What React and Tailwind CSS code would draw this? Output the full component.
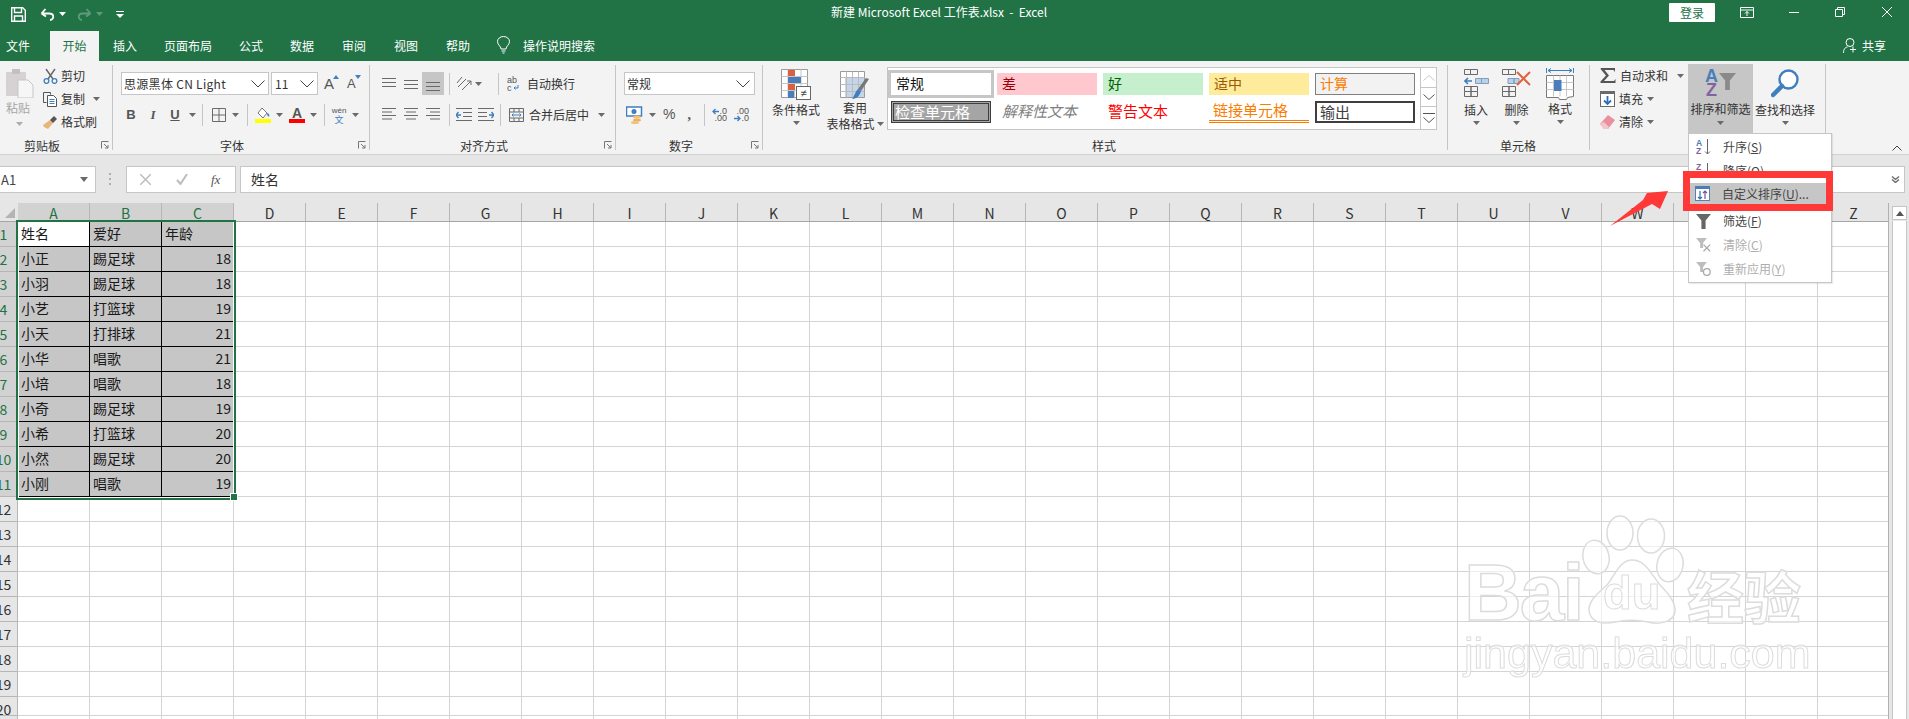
import React from 'react';

const Caret = ({ c = '' }) => (
  <svg className={`shrink-0 ${c}`} width="7" height="4" viewBox="0 0 7 4"><path d="M0 0h7L3.5 4z" fill="#6a6a6a" /></svg>
);
const Chevron = ({ c = '' }) => (
  <svg className={`shrink-0 ${c}`} width="14" height="8" viewBox="0 0 14 8"><path d="M.5.5 7 7l6.5-6.5" fill="none" stroke="#444" /></svg>
);
const Launcher = ({ c = '' }) => (
  <svg className={`shrink-0 ${c}`} width="8" height="8" viewBox="0 0 8 8"><path d="M.5 7.5v-7h7M3 3l4 4M7 4v3H4" fill="none" stroke="#777" /></svg>
);
const VSep = ({ c = '' }) => <div className={`w-px h-[22px] bg-[#c6c6c6] shrink-0 ${c}`} />;
const Lines = ({ ws, gap = 4, c = '', dy = 0, align = 'left' }) => (
  <svg className={`shrink-0 ${c}`} width="14" height="14" viewBox="0 0 14 14">
    {ws.map((w, i) => {
      const x = align === 'left' ? 0 : align === 'right' ? 14 - w : (14 - w) / 2;
      return <rect key={i} x={x} y={dy + i * gap} width={w} height="1" fill="#6a6a6a" />;
    })}
  </svg>
);

const Group = ({ w, label, labelMl, launcher, children }) => (
  <div className={`${w} h-[85px] mt-[4px] border-r border-[#c6c6c6] shrink-0 flex flex-col`}>
    <div className="h-[73px] shrink-0 relative">{children}</div>
    <div className="h-[16px] shrink-0 flex items-center leading-[16px] text-[#333]">
      <span className={labelMl}>{label}</span>
      {launcher && <Launcher c="ml-auto mr-[3px] -mt-[2px]" />}
    </div>
  </div>
);

const Save = () => (
  <svg width="15" height="15" viewBox="0 0 15 15" fill="none" stroke="#fff" strokeWidth="1.4">
    <path d="M.7.7h11l2.6 2.6v11H.7z" /><path d="M3.5 1v4.5h7V1M3.5 14V9h8v5" />
  </svg>
);
const Undo = ({ color = '#fff', flip }) => (
  <svg width="15" height="14" viewBox="0 0 15 14" fill="none" stroke={color} strokeWidth="1.8" className={flip ? '-scale-x-100' : ''}>
    <path d="M1.5 6.5 5.5 2M1.5 6.5 6 9.5M1.5 6.5H9c6 0 5 6.5 1 6.5" />
  </svg>
);

const Paste = () => (
  <svg width="28" height="30" viewBox="0 0 28 30">
    <rect x="0" y="4" width="20" height="24" rx="1" fill="#d6d2d4" />
    <rect x="6" y="1" width="8" height="5" fill="#c4c0c2" />
    <path d="M12 12h10l5 5v13H12z" fill="#f6f6f6" stroke="#c9c6c8" />
  </svg>
);
const Cut = () => (
  <svg width="15" height="16" viewBox="0 0 15 16" fill="none">
    <path d="M3 1l7 10M12 1 5 11" stroke="#666" strokeWidth="1.4" />
    <circle cx="3.5" cy="13" r="2.4" stroke="#3f7fbf" strokeWidth="1.3" />
    <circle cx="11.5" cy="13" r="2.4" stroke="#3f7fbf" strokeWidth="1.3" />
  </svg>
);
const Copy = () => (
  <svg width="15" height="15" viewBox="0 0 15 15" fill="none" stroke="#555">
    <path d="M.5.5h7v2M.5.5v10h3" />
    <path d="M4.5 3.5h6l3 3v8h-9z" fill="#fff" />
    <path d="M6.5 7.5h5M6.5 9.5h5M6.5 11.5h5" stroke="#3f7fbf" />
  </svg>
);
const Painter = () => (
  <svg width="15" height="15" viewBox="0 0 15 15">
    <path d="M7 5 10 8 5 14 1 12 0 10z" fill="#e8b778" />
    <path d="M7 5 11 1l3 3-4 4z" fill="#555" />
  </svg>
);
const Borders = () => (
  <svg width="14" height="14" viewBox="0 0 14 14" fill="none" stroke="#6a6a6a"><path d="M.5.5h13v13H.5zM7 .5v13M.5 7h13" /></svg>
);
const Fill = () => (
  <svg width="16" height="16" viewBox="0 0 16 16">
    <path d="M3 6 7 1l5 5-4 5z" fill="#fff" stroke="#777" />
    <path d="M12 6c2 .5 3 2 2 3.5-1 .5-2-1-2-3.5z" fill="#3f7fbf" />
    <rect x="0" y="12" width="16" height="4" fill="#ffff00" />
  </svg>
);
const FontColor = () => (
  <div className="w-[16px] h-[16px] flex flex-col items-center relative">
    <span className="text-[14px] leading-[12px] text-[#555] font-['Liberation_Sans',sans-serif] font-bold">A</span>
    <div className="absolute bottom-0 w-full h-[4px] bg-[#ff0000]" />
  </div>
);
const Orient = () => (
  <svg width="16" height="16" viewBox="0 0 16 16" fill="none" stroke="#6a6a6a">
    <path d="M1 7 6 1M4 9 9 4M2 11l8-8" />
    <path d="M6 14 15 5M15 5v4M15 5h-4" stroke="#6a6a6a" />
  </svg>
);
const Indent = ({ flip }) => (
  <svg width="16" height="14" viewBox="0 0 16 14" className={flip ? '-scale-x-100' : ''}>
    <path d="M5 7H0M2.5 4 0 7l2.5 3" fill="none" stroke="#3f7fbf" strokeWidth="1.4" />
    <path d="M0 .5h16M7 4.5h9M7 8.5h9M0 12.5h16" stroke="#6a6a6a" />
  </svg>
);
const Wrap = () => (
  <svg width="13" height="16" viewBox="0 0 13 16">
    <text x="0" y="7" fontSize="9" fontFamily="Liberation Sans" fill="#555">ab</text>
    <text x="0" y="15" fontSize="9" fontFamily="Liberation Sans" fill="#555">c</text>
    <path d="M11 9v3H7M8.5 10.5 7 12l1.5 1.5" fill="none" stroke="#3f7fbf" />
  </svg>
);
const Merge = () => (
  <svg width="15" height="14" viewBox="0 0 15 14" fill="none" stroke="#6a6a6a">
    <path d="M.5.5h14v13H.5zM.5 4h14M.5 10h14M5 .5V4M10 .5V4M5 10v3.5M10 10v3.5" />
    <path d="M3 7h9M3 7l1.5-1.5M3 7l1.5 1.5M12 7l-1.5-1.5M12 7l-1.5 1.5" stroke="#3f7fbf" />
  </svg>
);
const Money = () => (
  <svg width="18" height="18" viewBox="0 0 18 18">
    <rect x=".5" y="1" width="15" height="9" fill="#fff" stroke="#3f7fbf" strokeWidth="1.5" />
    <circle cx="8" cy="5.5" r="2.5" fill="#3f7fbf" />
    <ellipse cx="11" cy="11" rx="4" ry="1.6" fill="#f3c078" />
    <ellipse cx="11" cy="14" rx="4" ry="1.6" fill="#eeb060" />
    <ellipse cx="9" cy="16.5" rx="4" ry="1.5" fill="#f3c078" />
  </svg>
);
const Dec = ({ inc }) => (
  <div className="w-[15px] h-[14px] relative font-['Liberation_Sans',sans-serif] text-[9px] leading-[7px] text-[#555]">
    {inc ? (
      <>
        <div className="text-right">.0</div>
        <div className="text-right mt-[0px]">.00</div>
        <svg className="absolute left-0 top-0" width="7" height="7" viewBox="0 0 7 7" fill="none" stroke="#3f7fbf" strokeWidth="1.3"><path d="M7 3.5H1M3.5 1 1 3.5 3.5 6" /></svg>
      </>
    ) : (
      <>
        <div className="text-right">.00</div>
        <div className="text-right">.0</div>
        <svg className="absolute left-0 bottom-0" width="7" height="7" viewBox="0 0 7 7" fill="none" stroke="#3f7fbf" strokeWidth="1.3"><path d="M0 3.5h6M3.5 1 6 3.5 3.5 6" /></svg>
      </>
    )}
  </div>
);
const CondFmt = () => (
  <svg width="30" height="31" viewBox="0 0 30 31">
    <path d="M.5.5h26v28H.5z" fill="#fff" stroke="#9a9a9a" />
    <path d="M7 .5v28M13.5.5v28M20 .5v28M.5 7.5h26M.5 14.5h26M.5 21.5h26" stroke="#c6c6c6" />
    <rect x="7" y="1" width="7" height="6" fill="#d9613f" />
    <rect x="7" y="8" width="13" height="6" fill="#4a7ebb" />
    <rect x="7" y="15" width="7" height="6" fill="#d9613f" />
    <rect x="7" y="22" width="6" height="7" fill="#4a7ebb" />
    <rect x="15.5" y="17.5" width="14" height="13" fill="#fff" stroke="#666" />
    <text x="22.5" y="28" textAnchor="middle" fontSize="11" fill="#444" fontFamily="Liberation Sans">≠</text>
  </svg>
);
const TableFmt = () => (
  <svg width="30" height="29" viewBox="0 0 30 29">
    <path d="M.5.5h24v26H.5z" fill="#fff" stroke="#9a9a9a" />
    <rect x="5" y="7" width="19" height="19" fill="#c5d6ea" />
    <path d="M.5 6.5h24M.5 13.5h24M.5 20.5h24M6.500.5v26M12.500.5v26M18.500.5v26" stroke="#bbb" />
    <path d="M29 8 21 20l-3-2 8-11z" fill="#777" />
    <path d="M18 18l3 2c-1 5-5 8-9 8 2-2 3-7 6-10z" fill="#3f7fbf" />
  </svg>
);
const Ins = () => (
  <svg width="25" height="28" viewBox="0 0 25 28" fill="none" stroke="#6a6a6a">
    <path d="M.5.5h6v5h-6zM6.500.5h7v5h-7zM.5 17.500h6.500v5H.5zM7 17.500h6.500v5H7zM.5 22.500h6.500v5H.5zM7 22.500h6.500v5H7z" />
    <path d="M11.500 9.500h6v5h-6zM17.500 9.500h7v5h-7z" fill="#bcd0e6" stroke="#7f9ec0" />
    <path d="M8 12H1M4 9l-3 3 3 3" stroke="#3f7fbf" strokeWidth="1.6" />
  </svg>
);
const Del = () => (
  <svg width="29" height="28" viewBox="0 0 29 28" fill="none" stroke="#6a6a6a">
    <path d="M.5.5h6v5h-6zM6.500.5h7v5h-7zM.5 17.500h6.500v5H.5zM7 17.500h6.500v5H7zM.5 22.500h6.500v5H.5zM7 22.500h6.500v5H7z" />
    <path d="M6 9.500h6v5H6zM12 9.500h5v5h-5z" fill="#bcd0e6" stroke="#7f9ec0" />
    <path d="M15 3 28 16M28 3 15 16" stroke="#e0623f" strokeWidth="2" />
  </svg>
);
const Fmt = () => (
  <svg width="28" height="32" viewBox="0 0 28 32" fill="none">
    <path d="M.5 0v5M27.500 0v5M2 2.500h24M2 2.500 5 .5M2 2.500l3 2M26 2.500l-3-2M26 2.500l-3 2" stroke="#3f7fbf" />
    <path d="M.5 7.500h27v21l-6 1-1 2h-7l-1-2h-12z" fill="#fff" stroke="#7a7a7a" />
    <path d="M7.500 7.500v21M14 7.500v21M20.500 7.500v21M.5 14.500h27M.5 21.500h27" stroke="#c6c6c6" />
    <rect x="8" y="12" width="7.500" height="11" fill="#4a7ebb" />
  </svg>
);
const Sigma = () => (
  <svg width="16" height="15" viewBox="0 0 16 15"><path d="M1 0h14v4l-1.500-2H4.500L9 7.500 4 13h10l1.500-2v4H.5v-1.500L6 7.500.5 1z" fill="#555" /></svg>
);
const FillIc = () => (
  <svg width="15" height="16" viewBox="0 0 15 16">
    <rect x=".5" y=".5" width="14" height="15" fill="#fff" stroke="#6a6a6a" />
    <rect x="0" y="0" width="15" height="3" fill="#6a6a6a" />
    <path d="M7.500 5v8M4 9.500l3.500 3.500L11 9.500" fill="none" stroke="#2f6eb5" strokeWidth="1.8" />
  </svg>
);
const Eraser = () => (
  <svg width="15" height="14" viewBox="0 0 15 14">
    <path d="M0 9 8 0l7 5-7 9-4 0z" fill="#e9909c" />
    <path d="M0 9 4 14h4l1-2-5-5z" fill="#f4c5cc" />
  </svg>
);
const Funnel = ({ c = '#8a8a8a', w = 18, h = 19 }) => (
  <svg width={w} height={h} viewBox="0 0 18 19"><path d="M0 1h18l-6.500 8v10h-5V9z" fill={c} /></svg>
);
const Search = () => (
  <svg width="28" height="29" viewBox="0 0 28 29" fill="none">
    <circle cx="17.500" cy="10.500" r="9" stroke="#3f7fbf" strokeWidth="2.400" fill="#fff" />
    <path d="M11 17 2 26" stroke="#3f7fbf" strokeWidth="4.500" strokeLinecap="round" />
  </svg>
);
const AZ = ({ flip }) => (
  <svg width="15" height="16" viewBox="0 0 15 16" className="font-['Liberation_Sans',sans-serif]">
    <text x="0" y="7" fontSize="8.500" fontWeight="bold" fill={flip ? '#8064a2' : '#4a7ebb'}>{flip ? 'Z' : 'A'}</text>
    <text x="0" y="15" fontSize="8.500" fontWeight="bold" fill={flip ? '#4a7ebb' : '#8064a2'}>{flip ? 'A' : 'Z'}</text>
    <path d="M11.500 0v15M9 12.500l2.500 2.500 2.500-2.500" fill="none" stroke="#666" />
  </svg>
);
const CustomSort = () => (
  <svg width="15" height="15" viewBox="0 0 15 15">
    <rect x=".5" y=".5" width="14" height="14" fill="#fff" stroke="#5a7fb0" />
    <rect x="0" y="0" width="15" height="3" fill="#4a7ebb" />
    <path d="M5 5v8M3 11l2 2 2-2" fill="none" stroke="#2f6eb5" strokeWidth="1.200" />
    <path d="M10 13V5M8 7l2-2 2 2" fill="none" stroke="#7a4ea2" strokeWidth="1.200" />
  </svg>
);
const FClear = () => (
  <svg width="15" height="16" viewBox="0 0 18 19">
    <path d="M0 1h13L8.500 7v6H5V7z" fill="#bdbdbd" />
    <path d="M9 9l8 8M17 9l-8 8" stroke="#a8a8a8" strokeWidth="1.500" />
  </svg>
);
const FReapply = () => (
  <svg width="15" height="16" viewBox="0 0 18 19">
    <path d="M0 1h13L8.500 7v6H5V7z" fill="#bdbdbd" />
    <circle cx="13" cy="13" r="4" fill="none" stroke="#a8a8a8" strokeWidth="1.500" />
  </svg>
);

const Big = ({ w, ml = '', top = 'pt-[4px]', icon, label, caret = true }) => (
  <div className={`${w} ${ml} ${top} h-[65px] shrink-0 flex flex-col items-center`}>
    <div className="h-[32px] flex items-start justify-center">{icon}</div>
    <div className="h-[18px] leading-[18px] whitespace-nowrap">{label}</div>
    {caret && <Caret c="mt-[2px]" />}
  </div>
);

const Style = ({ c, children }) => (
  <div className={`w-[100px] h-[22px] mr-[6px] shrink-0 whitespace-nowrap ${c}`}>{children}</div>
);

const Ribbon = () => (
  <div className="h-[94px] bg-[#f3f3f3] border-b border-[#d2d2d2] flex items-start text-[12px] text-[#333]">
    {/* clipboard */}
    <Group w="w-[113px]" label="剪贴板" labelMl="ml-[24px]" launcher>
      <div className="flex h-full">
        <div className="w-[43px] flex flex-col items-start pl-[6px] pt-[3px] shrink-0">
          <Paste />
          <div className="text-[#a6a6a6] mt-[1px] leading-[18px]">粘贴</div>
          <Caret c="ml-[10px] mt-[5px] opacity-50" />
        </div>
        <div className="flex flex-col -mt-[1px]">
          <div className="h-[23px] flex items-center"><div className="w-[18px] mt-[1px]"><Cut /></div>剪切</div>
          <div className="h-[23px] flex items-center"><div className="w-[18px] mt-[1px]"><Copy /></div>复制<Caret c="ml-[8px] mt-[1px]" /></div>
          <div className="h-[23px] flex items-center"><div className="w-[18px] mt-[1px]"><Painter /></div>格式刷</div>
        </div>
      </div>
    </Group>
    {/* font */}
    <Group w="w-[257px]" label="字体" labelMl="ml-[107px]" launcher>
      <div className="flex items-center pl-[8px] pt-[7px]">
        <div className="w-[148px] h-[23px] bg-white border border-[#c6c6c6] flex items-center pl-[2px] pr-[3px] text-[12px] text-[#333] tracking-[0.3px]">
          思源黑体 CN Light<Chevron c="ml-auto" />
        </div>
        <div className="w-[47px] h-[23px] ml-[2px] bg-white border border-[#c6c6c6] flex items-center pl-[3px] pr-[3px]">11<Chevron c="ml-auto" /></div>
        <div className="ml-[6px] w-[13px] relative text-[15px] text-[#555] leading-[15px] font-['Liberation_Sans',sans-serif]">
          A<span className="absolute left-[9px] -top-[1px] w-0 h-0 border-x-[3px] border-x-transparent border-b-[4px] border-b-[#3f7fbf]" />
        </div>
        <div className="ml-[10px] w-[12px] relative text-[13px] text-[#555] leading-[15px] font-['Liberation_Sans',sans-serif]">
          A<span className="absolute left-[8px] -top-[1px] w-0 h-0 border-x-[3px] border-x-transparent border-t-[4px] border-t-[#3f7fbf]" />
        </div>
      </div>
      <div className="flex items-center pl-[11px] mt-[8px] h-[23px]">
        <span className="w-[14px] text-center font-bold text-[13px] text-[#555] font-['Liberation_Sans',sans-serif]">B</span>
        <span className="w-[14px] ml-[8px] text-center italic font-bold text-[13px] text-[#555] font-['Liberation_Serif',serif]">I</span>
        <span className="w-[14px] ml-[8px] text-center underline font-bold text-[13px] text-[#555] font-['Liberation_Sans',sans-serif]">U</span>
        <Caret c="ml-[7px]" />
        <VSep c="ml-[6px]" />
        <div className="ml-[9px]"><Borders /></div>
        <Caret c="ml-[6px]" />
        <VSep c="ml-[8px]" />
        <div className="ml-[7px]"><Fill /></div>
        <Caret c="ml-[5px]" />
        <div className="ml-[6px]"><FontColor /></div>
        <Caret c="ml-[5px]" />
        <VSep c="ml-[7px]" />
        <div className="ml-[6px] w-[16px] flex flex-col items-center font-['Liberation_Sans',sans-serif] text-[8px] leading-[9px] text-[#555]">
          wén<span className="text-[#3f7fbf] text-[9px] leading-[9px] font-['Noto_Sans_CJK_SC',sans-serif]">文</span>
        </div>
        <Caret c="ml-[5px]" />
      </div>
    </Group>
    {/* align */}
    <Group w="w-[246px]" label="对齐方式" labelMl="ml-[90px]" launcher>
      <div className="flex items-center pl-[12px] pt-[7px] h-[30px]">
        <Lines ws={[14, 14, 14]} gap={4} dy={1} />
        <Lines ws={[14, 14, 14]} gap={4} dy={3} c="ml-[8px]" />
        <div className="w-[22px] h-[23px] ml-[4px] bg-[#c6c6c6] flex items-center justify-center"><Lines ws={[14, 14, 14]} gap={4} dy={5} /></div>
        <VSep c="ml-[5px]" />
        <div className="ml-[6px]"><Orient /></div>
        <Caret c="ml-[3px]" />
        <VSep c="ml-[16px]" />
        <div className="ml-[8px]"><Wrap /></div>
        <span className="ml-[7px]">自动换行</span>
      </div>
      <div className="flex items-center pl-[12px] mt-[8px] h-[23px]">
        <Lines ws={[14, 10, 14, 10]} gap={3.5} />
        <Lines ws={[14, 10, 14, 10]} gap={3.5} align="center" c="ml-[8px]" />
        <Lines ws={[14, 10, 14, 10]} gap={3.5} align="right" c="ml-[8px]" />
        <VSep c="ml-[9px]" />
        <div className="ml-[6px]"><Indent /></div>
        <div className="ml-[6px]"><Indent flip /></div>
        <VSep c="ml-[6px]" />
        <div className="ml-[8px]"><Merge /></div>
        <span className="ml-[5px]">合并后居中</span>
        <Caret c="ml-[9px]" />
      </div>
    </Group>
    {/* number */}
    <Group w="w-[147px]" label="数字" labelMl="ml-[53px]" launcher>
      <div className="pl-[8px] pt-[7px]">
        <div className="w-[131px] h-[23px] bg-white border border-[#c6c6c6] flex items-center pl-[2px] pr-[4px]">常规<Chevron c="ml-auto" /></div>
      </div>
      <div className="flex items-center pl-[10px] mt-[8px] h-[23px]">
        <Money />
        <Caret c="ml-[5px]" />
        <span className="ml-[7px] text-[14px] text-[#555] font-['Liberation_Sans',sans-serif]">%</span>
        <span className="ml-[12px] text-[14px] font-bold text-[#555] font-['Liberation_Serif',serif] leading-[10px]">,</span>
        <VSep c="ml-[13px]" />
        <div className="ml-[7px]"><Dec inc /></div>
        <div className="ml-[7px]"><Dec /></div>
      </div>
    </Group>
    {/* styles */}
    <Group w="w-[685px]" label="样式" labelMl="ml-[329px]">
      <div className="flex items-start h-full">
        <Big w="w-[60px]" ml="ml-[3px]" icon={<CondFmt />} label="条件格式" />
        <div className="w-[58px] h-[65px] pt-[6px] flex flex-col items-center shrink-0">
          <div className="h-[30px]"><TableFmt /></div>
          <div className="h-[16px] leading-[16px]">套用</div>
          <div className="h-[16px] leading-[16px] whitespace-nowrap flex items-center">表格格式<Caret c="ml-[2px]" /></div>
        </div>
        <div className="ml-[3px] mt-[2px] w-[550px] h-[63px] bg-white border border-[#c6c6c6] flex shrink-0">
          <div className="w-[532px] pl-[3px] pt-[5px] shrink-0">
            <div className="flex text-[14px]">
              <Style c="pl-[5px] leading-[20px] bg-white ring-[3px] ring-[#c6c6c6] text-[#111]">常规</Style>
              <Style c="pl-[5px] leading-[20px] bg-[#ffc7ce] text-[#9c0006]">差</Style>
              <Style c="pl-[5px] leading-[20px] bg-[#c6efce] text-[#006100]">好</Style>
              <Style c="pl-[5px] leading-[20px] bg-[#ffeb9c] text-[#9c5700]">适中</Style>
              <Style c="pl-[4px] leading-[18px] bg-[#f2f2f2] border border-[#7f7f7f] text-[#fa7d00]">计算</Style>
            </div>
            <div className="flex mt-[6px] text-[15px]">
              <Style c="pl-[1px] leading-[15px] bg-[#a5a5a5] border-[3px] border-double border-[#3f3f3f] text-white">检查单元格</Style>
              <Style c="pl-[5px] leading-[20px] italic text-[#7f7f7f]">解释性文本</Style>
              <Style c="pl-[5px] leading-[20px] text-[#ff0000]">警告文本</Style>
              <Style c="pl-[4px] leading-[18px] text-[#fa7d00] border-b-[3px] border-double border-[#fa7d00]">链接单元格</Style>
              <Style c="pl-[3px] leading-[17px] bg-white border-2 border-[#3f3f3f] text-[#3f3f3f]">输出</Style>
            </div>
          </div>
          <div className="w-[16px] border-l border-[#c6c6c6] flex flex-col shrink-0">
            <div className="h-[20px] border-b border-[#c6c6c6] flex items-center justify-center">
              <svg width="12" height="6" viewBox="0 0 12 6"><path d="M.5 5.500 6 .5l5.500 5" fill="none" stroke="#c6c6c6" /></svg>
            </div>
            <div className="h-[19px] border-b border-[#c6c6c6] flex items-center justify-center">
              <svg width="12" height="6" viewBox="0 0 12 6"><path d="M.5.5 6 5.500 11.500.5" fill="none" stroke="#555" /></svg>
            </div>
            <div className="flex-1 flex flex-col items-center justify-center gap-[3px]">
              <div className="w-[12px] h-px bg-[#555]" />
              <svg width="12" height="6" viewBox="0 0 12 6"><path d="M.5.5 6 5.500 11.500.5" fill="none" stroke="#555" /></svg>
            </div>
          </div>
        </div>
      </div>
    </Group>
    {/* cells */}
    <Group w="w-[142px]" label="单元格" labelMl="ml-[52px]">
      <div className="flex items-start">
        <Big w="w-[28px]" ml="ml-[14px]" icon={<Ins />} label="插入" />
        <Big w="w-[29px]" ml="ml-[12px]" icon={<Del />} label="删除" />
        <Big w="w-[28px]" ml="ml-[15px]" top="pt-[3px]" icon={<Fmt />} label="格式" />
      </div>
    </Group>
    {/* editing */}
    <div className="w-[236px] h-[86px] mt-[3px] border-r border-[#c6c6c6] shrink-0 flex items-start">
      <div className="flex flex-col ml-[10px] w-[88px] shrink-0">
        <div className="h-[23px] flex items-center"><Sigma /><span className="ml-[4px]">自动求和</span><Caret c="ml-[9px]" /></div>
        <div className="h-[23px] flex items-center"><FillIc /><span className="ml-[4px]">填充</span><Caret c="ml-[4px]" /></div>
        <div className="h-[23px] flex items-center"><Eraser /><span className="ml-[4px]">清除</span><Caret c="ml-[4px]" /></div>
      </div>
      <div className="w-[65px] h-[70px] bg-[#c6c6c6] shrink-0 flex flex-col items-center pt-[5px]">
        <div className="h-[31px] flex items-start">
          <div className="flex flex-col w-[13px] items-center font-['Liberation_Sans',sans-serif] font-bold text-[18px] leading-[14px]">
            <span className="text-[#4a7ebb]">A</span><span className="text-[#8064a2]">Z</span>
          </div>
          <div className="mt-[3px] ml-[1px]"><Funnel w={17} h={18} /></div>
        </div>
        <div className="h-[18px] leading-[18px] whitespace-nowrap">排序和筛选</div>
        <Caret c="mt-[3px]" />
      </div>
      <Big w="w-[62px]" ml="ml-[1px]" top="pt-[5px]" icon={<Search />} label="查找和选择" />
    </div>
    <div className="ml-auto mt-[84px] mr-[7px]">
      <svg width="10" height="6" viewBox="0 0 10 6"><path d="M.5 5.500 5 1l4.500 4.500" fill="none" stroke="#444" /></svg>
    </div>
  </div>
);

const COLS = 'ABCDEFGHIJKLMNOPQRSTUVWXYZ'.split('');
const DATA = [
  ['姓名', '爱好', '年龄'],
  ['小正', '踢足球', '18'],
  ['小羽', '踢足球', '18'],
  ['小艺', '打篮球', '19'],
  ['小天', '打排球', '21'],
  ['小华', '唱歌', '21'],
  ['小培', '唱歌', '18'],
  ['小奇', '踢足球', '19'],
  ['小希', '打篮球', '20'],
  ['小然', '踢足球', '20'],
  ['小刚', '唱歌', '19'],
];
const ROWS = Array.from({ length: 21 }, (_, i) => i + 1);

const Sheet = () => (
  <div className="flex h-[516px] overflow-hidden relative">
    <div className="w-[1888px] shrink-0 overflow-hidden">
      <div className="flex h-[19px] bg-[#e6e6e6] border-b border-[#a6a6a6] w-[1890px]">
        <div className="w-[18px] shrink-0 flex items-end justify-end pr-[3px] pb-[3px]">
          <div className="w-0 h-0 border-l-[10px] border-l-transparent border-b-[10px] border-b-[#b4b4b4]" />
        </div>
        {COLS.map((c, i) => (
          <div key={c} className={`w-[72px] shrink-0 text-center text-[14px] leading-[20px] border-r border-[#b6b6b6] ${i < 3 ? 'bg-[#d2d2d2] text-[#217346]' : 'text-[#333]'}`}>{c}</div>
        ))}
      </div>
      {ROWS.map((r) => {
        const sel = r <= 11;
        const row = DATA[r - 1];
        return (
          <div key={r} className={`flex w-[1890px] ${r === 20 ? 'h-[19px]' : 'h-[25px]'}`}>
            <div className={`w-[18px] shrink-0 border-r border-b border-[#b6b6b6] text-[14px] leading-[24px] overflow-hidden ${sel ? 'bg-[#d2d2d2] text-[#217346]' : 'bg-[#e6e6e6] text-[#333]'}`}>
              <div className="w-[7px] flex justify-center whitespace-nowrap">{r}</div>
            </div>
            {COLS.map((c, i) => {
              const inData = sel && i < 3;
              const a1 = r === 1 && i === 0;
              const cls = inData
                ? `${a1 ? 'bg-white' : 'bg-[#c6c6c6]'} border-r border-b border-black`
                : 'border-r border-b border-[#d4d4d4] bg-white';
              const num = row && i === 2 && r > 1;
              return (
                <div key={c} className={`w-[72px] shrink-0 text-[14px] leading-[23px] text-[#1a1a1a] pl-[3px] pr-[2px] whitespace-nowrap ${num ? 'text-right' : ''} ${cls}`}>
                  {inData ? row[i] : ''}
                </div>
              );
            })}
          </div>
        );
      })}
    </div>
    <div className="w-[21px] bg-[#e6e6e6] border-l border-[#b0b0b0] pl-[3px] pr-[2px] pt-[3px] flex flex-col">
      <div className="h-[14px] bg-white border border-[#c6c6c6] flex items-center justify-center">
        <div className="w-0 h-0 border-x-[4px] border-x-transparent border-b-[5px] border-b-[#555]" />
      </div>
      <div className="flex-1 mt-px bg-white border-x border-[#c6c6c6]" />
    </div>

    {/* selection border */}
    <div className="absolute left-[16px] top-[17px] w-[220px] h-[280px] border-2 border-[#217346] pointer-events-none">
      <div className="w-full h-full border border-white border-t-0" />
    </div>
    <div className="absolute left-[231px] top-[291px] w-[6px] h-[6px] bg-[#217346] outline outline-1 outline-white" />
  </div>
);

const MenuItem = ({ icon, children, dim, c = 'h-[24px] pl-[7px]' }) => (
  <div className={`flex items-center ${c} ${dim ? 'text-[#aeaeae]' : 'text-[#444]'}`}>
    <div className="w-[15px] flex justify-center shrink-0">{icon}</div>
    <span className="ml-[12px] text-[12px] whitespace-nowrap">{children}</span>
  </div>
);

export default function App() {
  return (
    <div className="w-[1909px] h-[719px] relative overflow-hidden bg-white font-['Noto_Sans_CJK_SC',sans-serif] text-[12px]">
      {/* title */}
      <div className="bg-[#217346] h-[61px] text-white">
        <div className="h-[31px] flex items-center pb-[7px]">
          <div className="ml-[11px] mt-[4px]"><Save /></div>
          <div className="ml-[14px] mt-[4px]"><Undo /></div>
          <svg className="ml-[4px] mt-[4px]" width="7" height="4" viewBox="0 0 7 4"><path d="M0 0h7L3.500 4z" fill="#fff" /></svg>
          <div className="ml-[11px] mt-[4px]"><Undo color="#5f9a7c" flip /></div>
          <svg className="ml-[4px] mt-[4px]" width="7" height="4" viewBox="0 0 7 4"><path d="M0 0h7L3.500 4z" fill="#5f9a7c" /></svg>
          <svg className="ml-[13px] mt-[4px]" width="8" height="7" viewBox="0 0 8 7" fill="#fff"><rect width="8" height="1" /><path d="M0 3h8L4 7z" /></svg>
          <span className="ml-[707px] whitespace-pre">新建 Microsoft Excel 工作表.xlsx  -  Excel</span>
          <div className="ml-auto w-[46px] h-[19px] bg-white text-[#217346] text-center leading-[19px] rounded-[1px]">登录</div>
          <svg className="ml-[25px]" width="14" height="11" viewBox="0 0 14 11" fill="none" stroke="#fff"><path d="M.5.5h13v10H.5zM.5 3h13M7 9V4.500M5 6.500l2-2 2 2" /></svg>
          <div className="ml-[35px] w-[10px] h-px bg-white" />
          <svg className="ml-[36px]" width="10" height="10" viewBox="0 0 10 10" fill="none" stroke="#fff"><path d="M.5 2.500h7v7h-7zM2.500 2.500v-2h7v7h-2" /></svg>
          <svg className="ml-[37px] mr-[17px]" width="10" height="10" viewBox="0 0 10 10" fill="none" stroke="#fff"><path d="m0 0 10 10M10 0 0 10" /></svg>
        </div>
        <div className="h-[30px] flex items-start text-[12px] leading-[29px]">
          <div className="w-[50px] pl-[6px]">文件</div>
          <div className="w-[49px] h-full bg-[#f3f3f3] text-[#217346] text-center">开始</div>
          <span className="ml-[14px]">插入</span>
          <span className="ml-[27px]">页面布局</span>
          <span className="ml-[27px]">公式</span>
          <span className="ml-[27px]">数据</span>
          <span className="ml-[28px]">审阅</span>
          <span className="ml-[28px]">视图</span>
          <span className="ml-[28px]">帮助</span>
          <svg className="ml-[27px] mt-[5px]" width="13" height="18" viewBox="0 0 13 18" fill="none" stroke="#fff"><path d="M4 13c0-3-3.500-4-3.500-7.500a6 5 0 0 1 12 0C12.500 9 9 10 9 13zM4.500 15h4M5.500 17h2" /></svg>
          <span className="ml-[13px]">操作说明搜索</span>
          <svg className="ml-auto mt-[7px]" width="15" height="16" viewBox="0 0 15 16" fill="none" stroke="#fff"><circle cx="7" cy="4.500" r="4" /><path d="M.5 15c0-4 2-6 4-6M10 8.500v6M7 11.500h6" /></svg>
          <span className="ml-[4px] mr-[23px]">共享</span>
        </div>
      </div>
      <Ribbon />
      {/* formula bar */}
      <div className="h-[48px] bg-[#e6e6e6] flex items-start pt-[11px]">
        <div className="w-[96px] h-[27px] bg-white border border-[#c6c6c6] border-l-0 flex items-center pl-px text-[13px] text-[#444]">
          A1<div className="ml-auto mr-[7px] w-0 h-0 border-x-[4px] border-x-transparent border-t-[5px] border-t-[#6a6a6a]" />
        </div>
        <div className="ml-[13px] mt-[7px] flex flex-col gap-[3px]">
          <div className="w-[2px] h-[2px] bg-[#b0b0b0]" /><div className="w-[2px] h-[2px] bg-[#b0b0b0]" /><div className="w-[2px] h-[2px] bg-[#b0b0b0]" />
        </div>
        <div className="ml-[15px] w-[110px] h-[27px] bg-white border border-[#c6c6c6] flex items-center">
          <svg className="ml-[13px]" width="11" height="11" viewBox="0 0 11 11" fill="none" stroke="#bdbdbd" strokeWidth="1.500"><path d="m0 0 11 11M11 0 0 11" /></svg>
          <svg className="ml-[25px]" width="12" height="11" viewBox="0 0 12 11" fill="none" stroke="#bdbdbd" strokeWidth="2"><path d="m1 6 3.500 4L11 0" /></svg>
          <span className="ml-[23px] italic text-[13px] text-[#555] font-['Liberation_Serif',serif]">fx</span>
        </div>
        <div className="ml-[4px] w-[1665px] h-[27px] bg-white border border-[#c6c6c6] flex items-center pl-[10px] text-[14px] text-[#333]">
          姓名
          <svg className="ml-auto mr-[4px]" width="9" height="7" viewBox="0 0 9 7" fill="none" stroke="#666" strokeWidth="1.300"><path d="m1 .5 3.500 3 3.500-3M1 3.500l3.500 3 3.500-3" /></svg>
        </div>
      </div>
      <Sheet />

      {/* watermark */}
      <div className="absolute left-0 top-0 w-[1909px] h-[719px] pointer-events-none font-['Liberation_Sans',sans-serif]">
        <svg className="absolute left-[1580px] top-[510px] blur-[0.4px]" width="110" height="120" viewBox="1580 510 110 120" fill="rgba(255,255,255,.6)" stroke="#dcdcdc" strokeWidth="1.500">
          <ellipse cx="1620" cy="533" rx="13" ry="17" />
          <ellipse cx="1651" cy="536" rx="13.500" ry="17" />
          <ellipse cx="1596" cy="557" rx="13" ry="17" transform="rotate(-12 1596 557)" />
          <ellipse cx="1670" cy="565" rx="13" ry="17" transform="rotate(12 1670 565)" />
          <path d="M1632 560C1645 560 1650 572 1660 585 1672 597 1676 605 1675 612 1673 622 1660 625 1648 622 1638 620 1625 620 1615 622 1602 625 1590 622 1589 610 1589 600 1598 593 1607 585 1615 575 1620 560 1632 560Z" />
        </svg>
        <span className="absolute left-[1464px] top-[548px] text-[80px] leading-[90px] font-bold tracking-[-2px] text-white/60 [-webkit-text-stroke:1.5px_#dcdcdc] blur-[0.4px]">Bai</span>
        <span className="absolute left-[1603px] top-[565px] text-[47px] leading-[55px] font-bold text-white/60 [-webkit-text-stroke:1px_#dcdcdc] blur-[0.4px]">du</span>
        <span className="absolute left-[1687px] top-[554px] text-[57px] leading-[80px] font-bold font-['Noto_Sans_CJK_SC',sans-serif] text-white/60 [-webkit-text-stroke:1.5px_#dcdcdc] blur-[0.4px]">经验</span>
        <span className="absolute left-[1464px] top-[628px] text-[43px] leading-[50px] text-white/60 [-webkit-text-stroke:1px_#dcdcdc] blur-[0.4px]">jingyan.baidu.com</span>
      </div>

      {/* menu */}
      <div className="absolute left-[1688px] top-[133px] w-[144px] h-[150px] bg-white border border-[#c6c6c6] pt-[1px] shadow-[1px_1px_1px_rgba(0,0,0,.08)]">
        <MenuItem icon={<AZ />}>升序(<u>S</u>)</MenuItem>
        <MenuItem icon={<AZ flip />}>降序(<u>O</u>)</MenuItem>
        <div className="h-[26px]" />
        <MenuItem icon={<Funnel c="#666" w={15} h={16} />}>筛选(<u>F</u>)</MenuItem>
        <MenuItem icon={<FClear />} dim>清除(<u>C</u>)</MenuItem>
        <MenuItem icon={<FReapply />} dim>重新应用(<u>Y</u>)</MenuItem>
      </div>
      {/* red highlight */}
      <div className="absolute left-[1683px] top-[171px] w-[150px] h-[40px] border-[7px] border-[#ff3838] bg-white pt-[5px]">
        <div className="h-[21px] bg-[#c6c6c6]">
          <MenuItem icon={<CustomSort />} c="h-[21px] pl-[5px]">自定义排序(<u>U</u>)...</MenuItem>
        </div>
      </div>
      {/* arrow */}
      <svg className="absolute left-[1605px] top-[185px]" width="70" height="50" viewBox="1605 185 70 50">
        <path d="M1610 226 1643 200 1647 193 1668 191 1660 209 1652 204Z" fill="#ff3838" />
      </svg>
    </div>
  );
}
